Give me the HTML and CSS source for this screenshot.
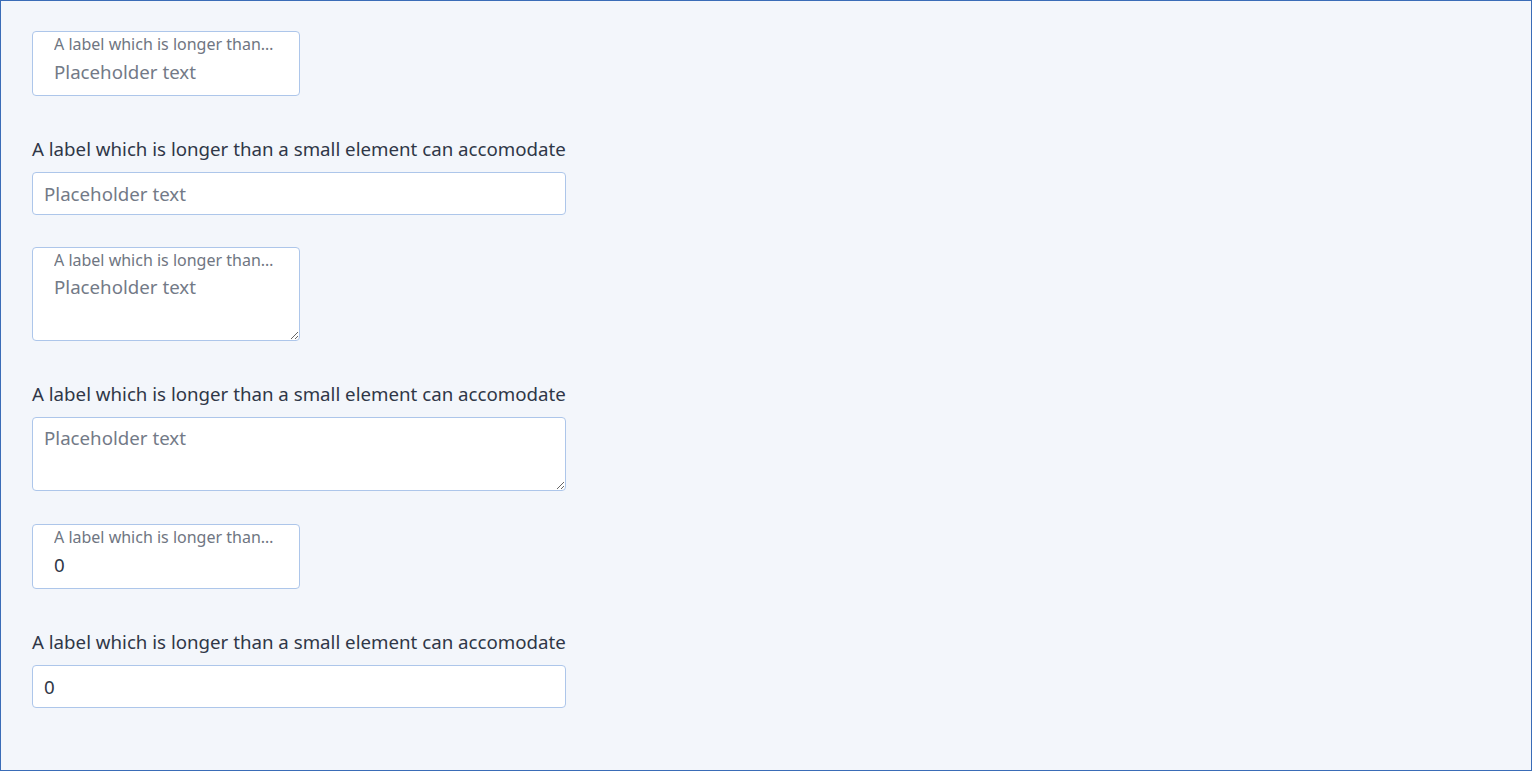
FILE: index.html
```html
<!DOCTYPE html>
<html lang="en">
<head>
  <meta charset="UTF-8" />
  <meta name="viewport" content="width=device-width, initial-scale=1" />
  <title>Form fields</title>
  <link rel="stylesheet" href="styles.css">
</head>
<body>
  <div class="page">

    <div class="field field-small floating">
      <label class="float-label" for="f1">A label which is longer than a small element can accomodate</label>
      <input id="f1" class="control" type="text" placeholder="Placeholder text" />
    </div>

    <div class="field field-wide">
      <label class="field-label" for="f2">A label which is longer than a small element can accomodate</label>
      <input id="f2" class="control" type="text" placeholder="Placeholder text" />
    </div>

    <div class="field field-small floating">
      <label class="float-label" for="f3">A label which is longer than a small element can accomodate</label>
      <textarea id="f3" class="control area" placeholder="Placeholder text"></textarea>
    </div>

    <div class="field field-wide">
      <label class="field-label" for="f4">A label which is longer than a small element can accomodate</label>
      <textarea id="f4" class="control area" placeholder="Placeholder text"></textarea>
    </div>

    <div class="field field-small floating">
      <label class="float-label" for="f5">A label which is longer than a small element can accomodate</label>
      <input id="f5" class="control" type="number" value="0" />
    </div>

    <div class="field field-wide">
      <label class="field-label" for="f6">A label which is longer than a small element can accomodate</label>
      <input id="f6" class="control" type="number" value="0" />
    </div>

  </div>
</body>
</html>
```

FILE: styles.css
```css
html, body {
  margin: 0;
  padding: 0;
}
body {
  font-family: "Noto Sans", "Open Sans", sans-serif;
  background-color: #f3f6fb;
  color: #2f3747;
}
.page {
  box-sizing: border-box;
  min-height: 100vh;
  border: 1px solid #3a6cb7;
  padding: 30px 31px;
}
.field {
  display: flex;
  flex-direction: column;
  margin-bottom: 32px;
}
.field-small {
  width: 268px;
}
.field-wide {
  width: 534px;
}
.field-label {
  display: block;
  font-size: 18.7px;
  line-height: 28px;
  margin: 7px 0 9px;
  white-space: nowrap;
  color: #2f3747;
}
.control {
  display: block;
  box-sizing: border-box;
  width: 100%;
  margin: 0;
  height: 43px;
  padding: 6px 11px 7px;
  font-family: inherit;
  font-size: 18.7px;
  line-height: 28px;
  color: #2f3747;
  background: #fff;
  border: 1px solid #adc6ea;
  border-radius: 4px;
  outline: none;
  -moz-appearance: textfield;
}
.control::-webkit-outer-spin-button,
.control::-webkit-inner-spin-button {
  -webkit-appearance: none;
  margin: 0;
}
.control::placeholder {
  color: #737a87;
  opacity: 1;
}
.area {
  height: 74px;
  resize: both;
}
.field-wide .area {
  margin-bottom: 1px;
}

/* label sitting inside the box */
.floating {
  position: relative;
}
.floating .control {
  height: 65px;
  padding: 25px 21px 10px;
}
.floating .area {
  height: 94px;
}
.float-label {
  position: absolute;
  top: 2px;
  left: 22px;
  right: 25px;
  font-size: 16px;
  line-height: 22px;
  color: #6f7682;
  white-space: nowrap;
  overflow: hidden;
  text-overflow: ellipsis;
  pointer-events: none;
}
```
